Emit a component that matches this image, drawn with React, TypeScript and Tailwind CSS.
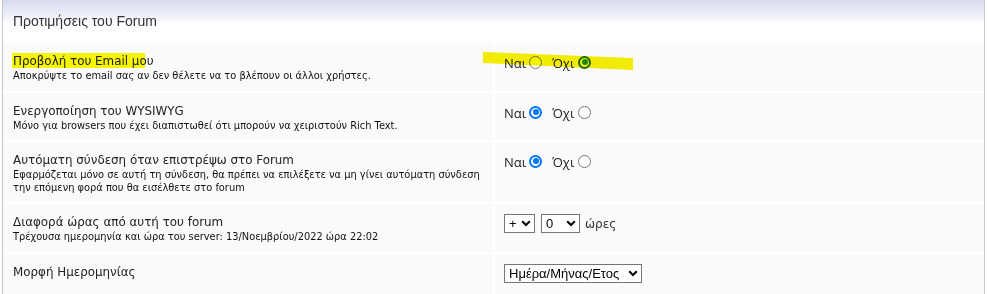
import React from 'react';

const titleFont = "font-['DejaVu_Sans',Verdana,sans-serif]";

const Radio = ({ checked, color }: { checked?: boolean; color?: 'blue' | 'green' }) => {
  if (checked && color === 'green') {
    return (
      <span className="inline-flex h-[13px] w-[13px] items-center justify-center rounded-full border-2 border-[#1b6e1b] bg-white">
        <span className="h-[6px] w-[6px] rounded-full bg-[#1f8f1f]" />
      </span>
    );
  }
  if (checked) {
    return (
      <span className="inline-flex h-[13px] w-[13px] items-center justify-center rounded-full border-2 border-[#0075ff] bg-white">
        <span className="h-[6px] w-[6px] rounded-full bg-[#0075ff]" />
      </span>
    );
  }
  return <span className="inline-block h-[13px] w-[13px] rounded-full border border-[#767676] bg-white" />;
};

const YesNo = ({ yes, green }: { yes: boolean; green?: boolean }) => (
  <div className="flex items-center font-['Open_Sans',sans-serif] text-[13px] text-[#222]">
    <span>Ναι</span>
    <span className="ml-[3px] mr-[10px] mt-[-3px] flex">
      <Radio checked={yes} color={green ? 'green' : 'blue'} />
    </span>
    <span>Όχι</span>
    <span className="ml-[4px] mt-[-3px] flex">
      <Radio checked={!yes} color={green ? 'green' : 'blue'} />
    </span>
  </div>
);

const Select = ({ label, w }: { label: string; w: string }) => (
  <span
    className={`flex h-[19px] shrink-0 items-center justify-between whitespace-nowrap border border-[#767676] bg-white pl-[4px] pr-[3px] font-['Liberation_Sans',Arial,sans-serif] text-[13px] text-black ${w}`}>
    <span>{label}</span>
    <svg width="10" height="7" viewBox="0 0 10 7" className="ml-[4px] shrink-0">
      <path d="M1.2 1.2 L5 5 L8.8 1.2" fill="none" stroke="#000" strokeWidth="2" />
    </svg>
  </span>
);

type Row = { title: string; desc?: string[]; h: string; right: React.ReactNode; pt: string; mark?: boolean };

const rows: Row[] = [
  {
    title: 'Προβολή του Email μου',
    desc: ['Αποκρύψτε το email σας αν δεν θέλετε να το βλέπουν οι άλλοι χρήστες.'],
    h: 'h-[48px]',
    pt: 'pt-[11px]',
    right: <YesNo yes={false} green />,
    mark: true,
  },
  {
    title: 'Ενεργοποίηση του WYSIWYG',
    desc: ['Μόνο για browsers που έχει διαπιστωθεί ότι μπορούν να χειριστούν Rich Text.'],
    h: 'h-[47px]',
    pt: 'pt-[11px]',
    right: <YesNo yes />,
  },
  {
    title: 'Αυτόματη σύνδεση όταν επιστρέψω στο Forum',
    desc: [
      'Εφαρμόζεται μόνο σε αυτή τη σύνδεση, θα πρέπει να επιλέξετε να μη γίνει αυτόματη σύνδεση',
      'την επόμενη φορά που θα εισέλθετε στο forum',
    ],
    h: 'h-[60px]',
    pt: 'pt-[11px]',
    right: <YesNo yes />,
  },
  {
    title: 'Διαφορά ώρας από αυτή του forum',
    desc: ['Τρέχουσα ημερομηνία και ώρα του server: 13/Νοεμβρίου/2022 ώρα 22:02'],
    h: 'h-[48px]',
    pt: 'pt-[10px]',
    right: (
      <div className="flex items-center">
        <Select label="+" w="w-[31px]" />
        <span className="ml-[6px] flex">
          <Select label="0" w="w-[39px]" />
        </span>
        <span className="ml-[5px] font-['DejaVu_Sans',sans-serif] text-[12px] text-[#333]">ώρες</span>
      </div>
    ),
  },
  {
    title: 'Μορφή Ημερομηνίας',
    h: 'h-[40px]',
    pt: 'pt-[10px]',
    right: <Select label="Ημέρα/Μήνας/Ετος" w="w-[138px]" />,
  },
];

export default function App() {
  return (
    <div className="relative h-[294px] w-[989px] overflow-hidden bg-white">
      <div className="ml-[2px] w-[983px] border-l border-r border-[#c6c6c6]">
        <div className="h-[43px] bg-[linear-gradient(#d6daee,#eef0f8_35%,#ffffff_55%,#ffffff)] pl-[10px] pt-[8px]">
          <span className="font-['Liberation_Sans',Arial,sans-serif] text-[14px] text-[#333]">
            Προτιμήσεις του Forum
          </span>
        </div>
        <div className="flex flex-col gap-[2px]">
          {rows.map((r, i) => (
            <div key={i} className={`grid grid-cols-[490px_1fr] gap-[2px] ${r.h}`}>
              <div className="bg-[#fafafc] pl-[10px] pt-[10px]">
                <div className={`${titleFont} relative text-[11.9px] leading-[16px] text-[#222]`}>
                  {r.mark && (
                    <span className="absolute left-[-1px] top-[0px] h-[15px] w-[133px] bg-[#f5f500]" />
                  )}
                  <span className="relative">{r.title}</span>
                </div>
                {r.desc && (
                  <div className={`${titleFont} text-[9.85px] leading-[13px] text-[#111]`}>
                    {r.desc.map((d, j) => (
                      <div key={j}>{d}</div>
                    ))}
                  </div>
                )}
              </div>
              <div className={`flex items-start bg-[#fafafc] pl-[9px] ${r.pt}`}>{r.right}</div>
            </div>
          ))}
        </div>
      </div>
      {/* yellow marker stroke over the first row's options */}
      <svg className="pointer-events-none absolute left-[482px] top-[50px] mix-blend-multiply" width="156" height="22" viewBox="0 0 156 22">
        <polygon points="1,2 151,8 151,20 1,13" fill="#f5f000" />
      </svg>
    </div>
  );
}
